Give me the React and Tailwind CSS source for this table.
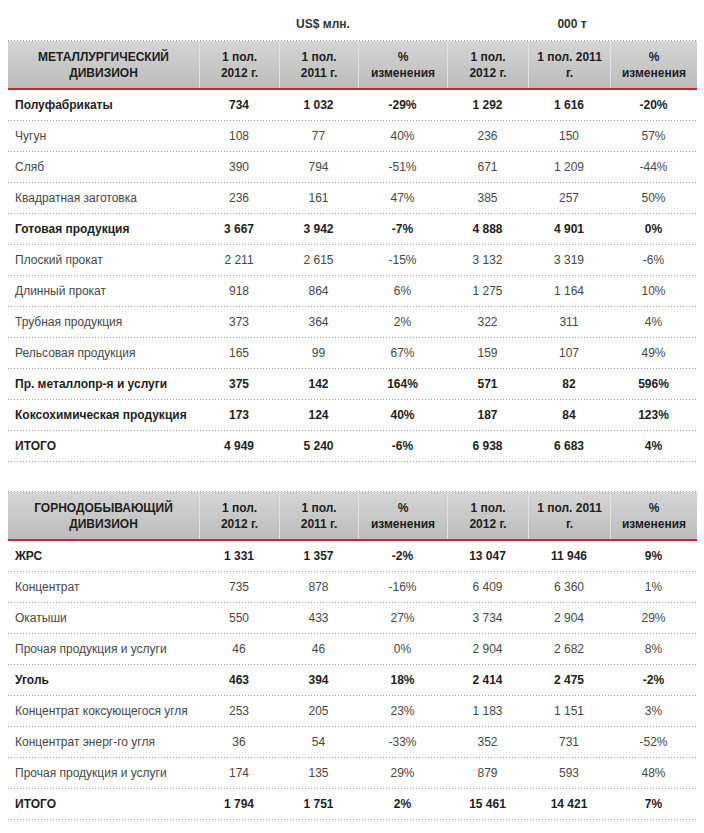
import React from "react";

const COLS = "grid grid-cols-[191px_80px_79px_89px_81px_82px_87px]";

const t1 = [
  ["Полуфабрикаты", true, ["734", "1 032", "-29%", "1 292", "1 616", "-20%"]],
  ["Чугун", false, ["108", "77", "40%", "236", "150", "57%"]],
  ["Сляб", false, ["390", "794", "-51%", "671", "1 209", "-44%"]],
  ["Квадратная заготовка", false, ["236", "161", "47%", "385", "257", "50%"]],
  ["Готовая продукция", true, ["3 667", "3 942", "-7%", "4 888", "4 901", "0%"]],
  ["Плоский прокат", false, ["2 211", "2 615", "-15%", "3 132", "3 319", "-6%"]],
  ["Длинный прокат", false, ["918", "864", "6%", "1 275", "1 164", "10%"]],
  ["Трубная продукция", false, ["373", "364", "2%", "322", "311", "4%"]],
  ["Рельсовая продукция", false, ["165", "99", "67%", "159", "107", "49%"]],
  ["Пр. металлопр-я и услуги", true, ["375", "142", "164%", "571", "82", "596%"]],
  ["Коксохимическая продукция", true, ["173", "124", "40%", "187", "84", "123%"]],
  ["ИТОГО", true, ["4 949", "5 240", "-6%", "6 938", "6 683", "4%"]],
];

const t2 = [
  ["ЖРС", true, ["1 331", "1 357", "-2%", "13 047", "11 946", "9%"]],
  ["Концентрат", false, ["735", "878", "-16%", "6 409", "6 360", "1%"]],
  ["Окатыши", false, ["550", "433", "27%", "3 734", "2 904", "29%"]],
  ["Прочая продукция и услуги", false, ["46", "46", "0%", "2 904", "2 682", "8%"]],
  ["Уголь", true, ["463", "394", "18%", "2 414", "2 475", "-2%"]],
  ["Концентрат коксующегося угля", false, ["253", "205", "23%", "1 183", "1 151", "3%"]],
  ["Концентрат энерг-го угля", false, ["36", "54", "-33%", "352", "731", "-52%"]],
  ["Прочая продукция и услуги", false, ["174", "135", "29%", "879", "593", "48%"]],
  ["ИТОГО", true, ["1 794", "1 751", "2%", "15 461", "14 421", "7%"]],
];

function Dots() {
  return (
    <div className="h-px w-full bg-[linear-gradient(to_right,#9a9a9a_1px,transparent_1px)] bg-[length:3px_1px]" />
  );
}

function Header({ title }) {
  const cells = [
    ["1 пол.", "2012 г."],
    ["1 пол.", "2011 г."],
    ["%", "изменения"],
    ["1 пол.", "2012 г."],
    ["1 пол. 2011", "г."],
    ["%", "изменения"],
  ];
  return (
    <div>
      <Dots />
      <div className={`${COLS} h-[49px] bg-[linear-gradient(to_bottom,#d5d5d5,#bcbcbc)] border-b-2 border-[#c8282c]`}>
        <div className="flex flex-col items-center justify-center font-bold text-[12px] leading-[16px] text-[#1e1e1e] text-center">
          {title.map((l, i) => (
            <span key={i}>{l}</span>
          ))}
        </div>
        {cells.map((c, i) => (
          <div
            key={i}
            className="flex flex-col items-center justify-center border-l border-[#e2e2e2] font-bold text-[12px] leading-[16px] text-[#1e1e1e] text-center"
          >
            <span>{c[0]}</span>
            <span>{c[1]}</span>
          </div>
        ))}
      </div>
    </div>
  );
}

function Row({ label, bold, vals }) {
  const tc = bold ? "font-bold text-[#1e1e1e]" : "text-[#474747]";
  return (
    <div>
      <div className={`${COLS} h-[30px] items-center text-[12px] ${tc}`}>
        <div className="pl-[7px] whitespace-nowrap">{label}</div>
        {vals.map((v, i) => (
          <div key={i} className="text-center whitespace-pre">
            {v}
          </div>
        ))}
      </div>
      <Dots />
    </div>
  );
}

function Table({ title, rows }) {
  return (
    <div>
      <Header title={title} />
      {rows.map((r, i) => (
        <Row key={i} label={r[0]} bold={r[1]} vals={r[2]} />
      ))}
    </div>
  );
}

export default function App() {
  return (
    <div className="w-[704px] h-[833px] bg-white font-['Liberation_Sans',Arial,sans-serif] overflow-hidden">
      <div className="ml-[8px] w-[689px]">
        <div className={`${COLS} h-[40px] pt-[16px] text-[12px] leading-[16px] font-bold text-[#333]`}>
          <div />
          <div className="col-span-3 text-center">US$ млн.</div>
          <div className="col-span-3 text-center">000 т</div>
        </div>
        <Table title={["МЕТАЛЛУРГИЧЕСКИЙ", "ДИВИЗИОН"]} rows={t1} />
        <div className="h-[29px]" />
        <Table title={["ГОРНОДОБЫВАЮЩИЙ", "ДИВИЗИОН"]} rows={t2} />
      </div>
    </div>
  );
}
